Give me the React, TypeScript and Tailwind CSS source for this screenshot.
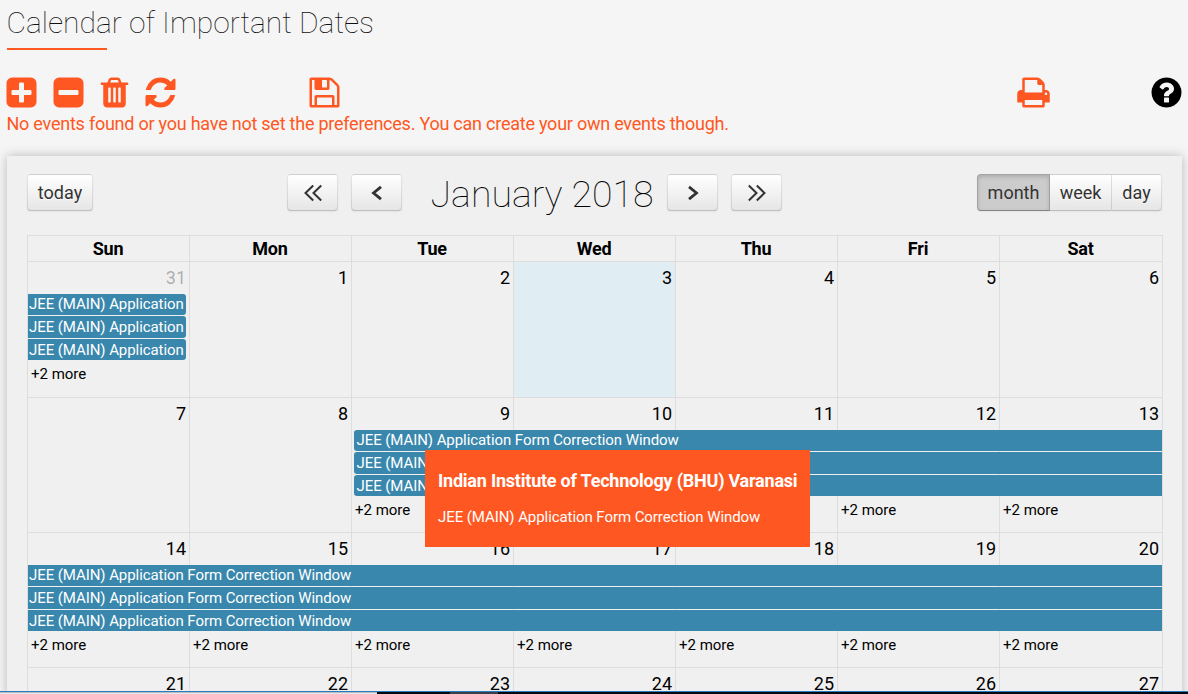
import React from "react";

const SQUARE =
  "m256-544v960q0 119-84.5 203.5t-203.5 84.5h-960q-119 0-203.5-84.5t-84.5-203.5v-960q0-119 84.5-203.5t203.5-84.5h960q119 0 203.5 84.5t84.5 203.5z";

const ICONS = {
  plus:
    "M1408 960v-128q0-26-19-45t-45-19h-320v-320q0-26-19-45t-45-19h-128q-26 0-45 19t-19 45v320h-320q-26 0-45 19t-19 45v128q0 26 19 45t45 19h320v320q0 26 19 45t45 19h128q26 0 45-19t19-45v-320h320q26 0 45-19t19-45z" +
    SQUARE,
  minus:
    "M1408 960v-128q0-26-19-45t-45-19h-896q-26 0-45 19t-19 45v128q0 26 19 45t45 19h896q26 0 45-19t19-45z" + SQUARE,
  trash:
    "M704 1376v-704q0-14-9-23t-23-9h-64q-14 0-23 9t-9 23v704q0 14 9 23t23 9h64q14 0 23-9t9-23zm256 0v-704q0-14-9-23t-23-9h-64q-14 0-23 9t-9 23v704q0 14 9 23t23 9h64q14 0 23-9t9-23zm256 0v-704q0-14-9-23t-23-9h-64q-14 0-23 9t-9 23v704q0 14 9 23t23 9h64q14 0 23-9t9-23zm-544-992h448l-48-117q-7-9-17-11h-317q-10 2-17 11zm928 32v64q0 14-9 23t-23 9h-96v948q0 83-47 143.5t-113 60.5h-832q-66 0-113-58.5t-47-141.5v-952h-96q-14 0-23-9t-9-23v-64q0-14 9-23t23-9h309l70-167q15-37 54-63t79-26h320q40 0 79 26t54 63l70 167h309q14 0 23 9t9 23z",
  refresh:
    "M1639 1056q0 5-1 7-64 268-268 434.5t-478 166.5q-146 0-282.5-55t-243.5-157l-129 129q-19 19-45 19t-45-19-19-45v-448q0-26 19-45t45-19h448q26 0 45 19t19 45-19 45l-137 137q71 66 161 102t187 36q134 0 250-65t186-179q11-17 53-117 8-23 30-23h192q13 0 22.5 9.5t9.5 22.5zm25-800v448q0 26-19 45t-45 19h-448q-26 0-45-19t-19-45 19-45l138-138q-148-137-349-137-134 0-250 65t-186 179q-11 17-53 117-8 23-30 23h-199q-13 0-22.5-9.5t-9.5-22.5v-7q65-268 270-434.5t480-166.5q146 0 284 55.5t245 156.5l130-129q19-19 45-19t45 19 19 45z",
  save:
    "M512 1536h768v-384h-768v384zm896 0h128v-896q0-14-10-38.5t-20-34.5l-281-281q-10-10-34-20t-39-10v416q0 40-28 68t-68 28h-576q-40 0-68-28t-28-68v-416h-128v1280h128v-416q0-40 28-68t68-28h832q40 0 68 28t28 68v416zm-384-928v-320q0-13-9.5-22.5t-22.5-9.5h-192q-13 0-22.5 9.5t-9.5 22.5v320q0 13 9.5 22.5t22.5 9.5h192q13 0 22.5-9.5t9.5-22.5zm640 32v928q0 40-28 68t-68 28h-1344q-40 0-68-28t-28-68v-1344q0-40 28-68t68-28h928q40 0 88 20t76 48l280 280q28 28 48 76t20 88z",
  print:
    "M448 1536h896v-256h-896v256zm0-640h896v-384h-160q-40 0-68-28t-28-68v-160h-640v640zm1152 64q0-26-19-45t-45-19-45 19-19 45 19 45 45 19 45-19 19-45zm128 0v416q0 13-9.5 22.5t-22.5 9.5h-224v160q0 40-28 68t-68 28h-960q-40 0-68-28t-28-68v-160h-224q-13 0-22.5-9.5t-9.5-22.5v-416q0-79 56.5-135.5t135.5-56.5h64v-544q0-40 28-68t68-28h672q40 0 88 20t76 48l152 152q28 28 48 76t20 88v256h64q79 0 135.5 56.5t56.5 135.5z",
  help:
    "M1024 1376v-192q0-14-9-23t-23-9h-192q-14 0-23 9t-9 23v192q0 14 9 23t23 9h192q14 0 23-9t9-23zm256-672q0-88-55.5-163t-138.5-116-170-41q-243 0-371 213-15 24 8 42l132 100q7 6 19 6 16 0 25-12 53-68 86-92 34-24 86-24 48 0 85.5 26t37.5 59q0 38-20 61t-68 45q-63 28-115.5 86.5t-52.5 125.5v36q0 14 9 23t23 9h192q14 0 23-9t9-23q0-19 21.5-49.5t54.5-49.5q32-18 49-28.5t46-35 44.5-48 28-60.5 12.5-81zm384 192q0 209-103 385.5t-279.5 279.5-385.5 103-385.5-103-279.5-279.5-103-385.5 103-385.5 279.5-279.5 385.5-103 385.5 103 279.5 279.5 103 385.5z",
};

function Icon({ name, className }: { name: keyof typeof ICONS; className: string }) {
  return (
    <svg viewBox="0 0 1792 1792" className={"h-[35px] w-[35px] shrink-0 fill-current " + className}>
      <path d={ICONS[name]} />
    </svg>
  );
}

const BUTTON =
  "flex h-[37px] items-center justify-center border border-black/10 border-b-black/25 bg-[#f5f5f5] bg-linear-to-b from-white to-[#e6e6e6] text-[18px] text-[#333] [text-shadow:0_1px_1px_rgba(255,255,255,0.75)] shadow-[inset_0_1px_0_rgba(255,255,255,0.2),0_1px_2px_rgba(0,0,0,0.05)] ";

function Chevron({ double, flip }: { double?: boolean; flip?: boolean }) {
  return (
    <svg
      viewBox="0 0 20 20"
      className={"h-5 w-5 fill-none stroke-[#333] " + (flip ? "-scale-x-100" : "")}
      strokeWidth={double ? 2 : 2.8}
    >
      {double ? <path d="M10.2 2.5 2.5 10l7.7 7.5M18.2 2.5 10.5 10l7.7 7.5" /> : <path d="M14 3.8 6.5 10l7.5 6.2" />}
    </svg>
  );
}

function NavButton({ double, flip, className }: { double?: boolean; flip?: boolean; className: string }) {
  return (
    <button className={BUTTON + "w-[51px] rounded-[4px] " + className}>
      <Chevron double={double} flip={flip} />
    </button>
  );
}

const EVENT = "JEE (MAIN) Application Form Correction Window";

type Week = { days: number[]; height: string; kind?: "first" | "begin" | "full" };

const WEEKS: Week[] = [
  { days: [31, 1, 2, 3, 4, 5, 6], height: "h-[136px]", kind: "first" },
  { days: [7, 8, 9, 10, 11, 12, 13], height: "h-[135px]", kind: "begin" },
  { days: [14, 15, 16, 17, 18, 19, 20], height: "h-[135px]", kind: "full" },
  { days: [21, 22, 23, 24, 25, 26, 27], height: "h-[135px]" },
];

const SPANS = {
  first: "col-span-1 col-start-1 mr-[4px] rounded-r-[3px] pl-px",
  begin: "col-span-5 col-start-3 mr-[2px] ml-[2px] rounded-l-[3px] pl-[2.5px]",
  full: "col-span-7 col-start-1 mr-[2px] pl-px",
};

const COLS = "grid grid-cols-[162px_162px_162px_162px_162px_162px_164px]";

function WeekRow({ week }: { week: Week }) {
  const { kind } = week;
  const hasMore = (i: number) => (kind === "first" ? i === 0 : kind === "begin" ? i >= 2 : kind === "full");
  return (
    <div className={"relative shrink-0 " + week.height}>
      <div className={COLS + " h-full"}>
        {week.days.map((day, i) => (
          <div
            key={day}
            className={
              "flex flex-col border-t border-l border-[#ddd] pt-[2px] last:border-r " +
              (day === 3 ? "bg-[#e0edf2]" : "")
            }
          >
            <div
              className={
                "pr-[3px] text-right text-[18px] leading-[27px] " +
                (kind === "first" && day === 31 ? "text-black/30" : "text-black")
              }
            >
              {day}
            </div>
            {hasMore(i) && <div className="mt-[73px] pl-[3px] text-[15px] leading-[20px]">+2 more</div>}
          </div>
        ))}
      </div>
      {kind && (
        <div className={COLS + " absolute inset-x-0 top-[33px] gap-y-px pl-px"}>
          {["h-[21px] leading-[20px]", "h-[22px] leading-[22px]", "h-[21px] leading-[22px]"].map((h, i) => (
            <div
              key={i}
              className={
                "overflow-hidden bg-[#3a87ad] text-[15px] tracking-[-0.07px] whitespace-nowrap text-white " +
                SPANS[kind] +
                " " +
                h
              }
            >
              {kind === "first" ? "JEE (MAIN) Application" : EVENT}
            </div>
          ))}
        </div>
      )}
    </div>
  );
}

export default function App() {
  return (
    <div className="relative flex h-[694px] w-[1188px] flex-col overflow-hidden bg-[#f5f5f5] font-['Roboto',sans-serif] text-black">
      <header className="flex h-[50px] shrink-0 flex-col justify-between pl-[6.5px]">
        <h1 className="text-[30px] leading-[46px] font-thin text-[#111]">Calendar of Important Dates</h1>
        <div className="h-[2px] w-[100px] shrink-0 bg-[#ff5722]" />
      </header>

      <div className="mt-[25px] flex h-[35px] shrink-0 items-center pl-1 text-[#ff5722]">
        <Icon name="plus" className="" />
        <Icon name="minus" className="ml-[12px]" />
        <Icon name="trash" className="ml-[11px]" />
        <Icon name="refresh" className="ml-[11px]" />
        <Icon name="save" className="ml-[128.5px]" />
        <Icon name="print" className="ml-[674px]" />
        <Icon name="help" className="ml-[98px] text-black" />
      </div>
      <p className="shrink-0 pl-[6.5px] text-[18px] leading-[27px] tracking-[-0.236px] text-[#ff5722]">
        No events found or you have not set the preferences. You can create your own events though.
      </p>

      <main className="mt-[19px] ml-[7px] flex h-[600px] w-[1175px] shrink-0 flex-col bg-[#f0f0f0] px-5 pt-[18px] shadow-[0_0_10px_rgba(0,0,0,0.25)]">
        <div className="flex h-[61px] shrink-0 items-start">
          <button className={BUTTON + "w-[66px] rounded-[4px]"}>today</button>
          <NavButton double className="ml-[194px]" />
          <NavButton className="ml-[13px]" />
          <h2 className="mx-[13px] w-[239px] pl-[15.5px] text-[37.5px] leading-[40px] font-thin whitespace-nowrap">
            January 2018
          </h2>
          <NavButton flip className="" />
          <NavButton double flip className="ml-[13px]" />
          <div className="ml-auto flex">
            <button className="flex h-[37px] w-[73px] items-center justify-center rounded-l-[4px] border border-black/20 border-b-black/35 bg-[#ccc] text-[18px] text-[#333] shadow-[inset_0_2px_4px_rgba(0,0,0,0.15),0_1px_2px_rgba(0,0,0,0.05)]">
              month
            </button>
            <button className={BUTTON + "w-[62px] border-l-0"}>week</button>
            <button className={BUTTON + "w-[50px] rounded-r-[4px] border-l-0"}>day</button>
          </div>
        </div>

        <div className="flex w-[1136px] flex-col">
          <div className={COLS + " h-[26px] shrink-0"}>
            {["Sun", "Mon", "Tue", "Wed", "Thu", "Fri", "Sat"].map((d) => (
              <div
                key={d}
                className="border-t border-l border-[#ddd] pr-px text-center text-[18px] leading-[26px] font-bold tracking-[-0.2px] last:border-r"
              >
                {d}
              </div>
            ))}
          </div>
          {WEEKS.map((week) => (
            <WeekRow key={week.days[0]} week={week} />
          ))}
        </div>
      </main>

      <div className="absolute top-[450px] left-[425px] h-[97px] w-[385px] bg-[#ff5722] px-[13px] pt-[17px] whitespace-nowrap text-white">
        <p className="text-[18px] leading-[27px] font-bold tracking-[-0.22px]">
          Indian Institute of Technology (BHU) Varanasi
        </p>
        <p className="mt-[12px] text-[15px] leading-[22px] tracking-[-0.07px]">{EVENT}</p>
      </div>

      <div className="absolute inset-x-0 bottom-0 flex h-[3px] flex-col">
        <div className="h-px bg-[#2a7ac0]" />
        <div className="flex h-[2px]">
          <div className="w-[377px] border-t border-[#b9bcbf] bg-[#e4e8ec]" />
          <div className="w-[73px] bg-[#04080f]" />
          <div className="w-[48px] bg-[#3b3f47]" />
          <div className="flex-1 bg-[#04080f]" />
        </div>
      </div>
    </div>
  );
}
